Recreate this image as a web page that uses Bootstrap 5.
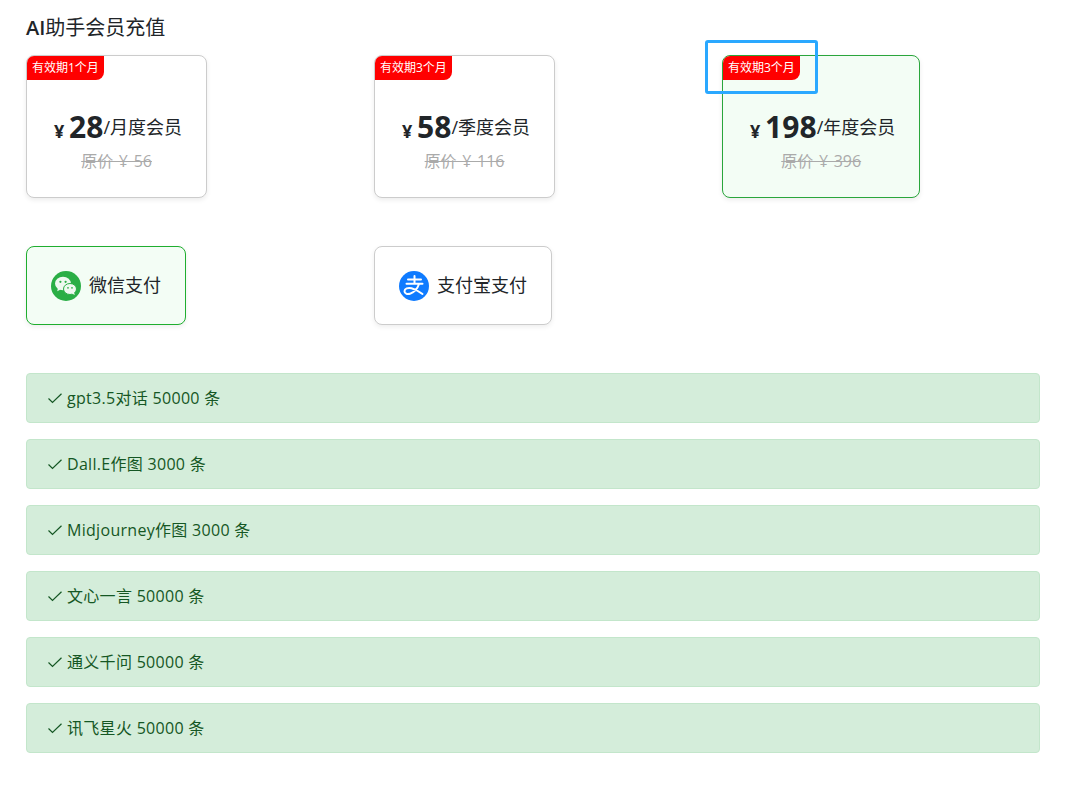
<!DOCTYPE html>
<html lang="zh">
<head>
<meta charset="utf-8">
<title>AI助手会员充值</title>
<link href="https://cdn.jsdelivr.net/npm/bootstrap@5.3.0/dist/css/bootstrap.min.css" rel="stylesheet">
<style>
html,body{height:100%;overflow:hidden;}
body{font-family:"Open Sans","Noto Sans CJK SC",sans-serif;color:#212529;background:#fff;}
.pg{padding:15px 36px 0 26px;}
.pg-title{font-size:20px;line-height:26px;font-weight:400;margin:0 0 14px;}
.pg-title b{font-weight:600;}
.slots{margin-right:-30px;}
.plan{position:relative;height:143px;padding:0 24px 0 27px;border:1px solid #ccc;border-radius:8px;box-shadow:0 2px 5px rgba(0,0,0,.08);background:#fff;overflow:hidden;}
.plan.on{border-color:#2aa63c;background:#f3fdf5;}
.tagx{position:absolute;left:0;top:0;height:24px;line-height:24px;padding:0 5px;background:#f00;color:#fff;font-size:12px;border-bottom-right-radius:8px;}
.priceline{font-size:18px;line-height:38px;height:38px;white-space:nowrap;margin-top:52px;}
.cur{font-size:18px;font-weight:700;}
.amt{font-size:30px;font-weight:700;letter-spacing:.1px;}
.unit{vertical-align:4px;}
.orig{font-size:16px;line-height:24px;color:#aaa;text-decoration:line-through;word-spacing:1.5px;margin:3px 0 0 -3px;}
.pays{margin-top:48px;}
.payb{height:79px;padding:0 24px 0 24px;gap:8px;border:1px solid #ccc;border-radius:8px;box-shadow:0 2px 5px rgba(0,0,0,.07);font-size:18px;background:#fff;}
.payb.on{border-color:#1fae2f;background:#f3fdf5;}
.perks{margin-top:48px;}
.perk{height:50px;margin-bottom:16px;padding:0 20px;gap:4px;background:#d4edda;border:1px solid #c3e6cb;border-radius:4px;color:#155724;font-size:16px;letter-spacing:.3px;}
.focusbox{position:absolute;left:705px;top:40px;width:113px;height:54px;border:3px solid #2aa8ff;border-radius:3px;pointer-events:none;}
</style>
</head>
<body>
<div class="pg">
  <h1 class="pg-title"><b>AI</b>助手会员充值</h1>
  <div class="row g-0 slots">
    <div class="col-4 d-flex"><div class="plan text-center"><span class="tagx">有效期1个月</span><div class="priceline"><span class="cur">¥</span> <span class="amt">28</span><span class="unit">/月度会员</span></div><div class="orig">原价 ¥ 56</div></div></div>
    <div class="col-4 d-flex"><div class="plan text-center"><span class="tagx">有效期3个月</span><div class="priceline"><span class="cur">¥</span> <span class="amt">58</span><span class="unit">/季度会员</span></div><div class="orig">原价 ¥ 116</div></div></div>
    <div class="col-4 d-flex"><div class="plan on text-center"><span class="tagx">有效期3个月</span><div class="priceline"><span class="cur">¥</span> <span class="amt">198</span><span class="unit">/年度会员</span></div><div class="orig">原价 ¥ 396</div></div></div>
  </div>
  <div class="row g-0 slots pays">
    <div class="col-4 d-flex"><div class="payb on d-flex align-items-center">
      <svg width="30" height="30" viewBox="0 0 30 30"><circle cx="15" cy="15" r="15" fill="#2aae45"/><ellipse cx="12" cy="12.500" rx="8" ry="6.800" fill="#eef8ef"/><path d="M7 17l-.8 3.200 3.400-1.800z" fill="#eef8ef"/><ellipse cx="19" cy="18" rx="6.500" ry="5.500" fill="#eef8ef" stroke="#2aae45" stroke-width="1"/><path d="M23 21.500l.8 2.500-3-1.400z" fill="#eef8ef"/><circle cx="9.400" cy="10.800" r="1.100" fill="#2aae45"/><circle cx="14.600" cy="10.800" r="1.100" fill="#2aae45"/><circle cx="17" cy="16.800" r=".85" fill="#2aae45"/><circle cx="21" cy="16.800" r=".85" fill="#2aae45"/></svg>
      <span>微信支付</span></div></div>
    <div class="col-4 d-flex"><div class="payb d-flex align-items-center">
      <svg width="30" height="30" viewBox="0 0 30 30"><circle cx="15" cy="15" r="15" fill="#0f7bff"/><path d="M9 8.500h13M15.500 5v7.800M7.500 12.800h16M20 13c-1.500 4.500-4.500 8-8.500 9.500-3 1-6 .3-6-2.300 0-2.700 3.500-3.800 7-3 3.500.8 7.500 3 11 5.800" fill="none" stroke="#fff" stroke-width="2" stroke-linecap="round"/></svg>
      <span>支付宝支付</span></div></div>
  </div>
  <div class="perks">
    <div class="perk d-flex align-items-center"><svg width="16" height="16" viewBox="0 0 16 16"><path d="M1.500 8.500l4 4L14.500 3.800" fill="none" stroke="#155724" stroke-width="1.200"/></svg><span>gpt3.5对话 50000 条</span></div>
    <div class="perk d-flex align-items-center"><svg width="16" height="16" viewBox="0 0 16 16"><path d="M1.500 8.500l4 4L14.500 3.800" fill="none" stroke="#155724" stroke-width="1.200"/></svg><span>Dall.E作图 3000 条</span></div>
    <div class="perk d-flex align-items-center"><svg width="16" height="16" viewBox="0 0 16 16"><path d="M1.500 8.500l4 4L14.500 3.800" fill="none" stroke="#155724" stroke-width="1.200"/></svg><span>Midjourney作图 3000 条</span></div>
    <div class="perk d-flex align-items-center"><svg width="16" height="16" viewBox="0 0 16 16"><path d="M1.500 8.500l4 4L14.500 3.800" fill="none" stroke="#155724" stroke-width="1.200"/></svg><span>文心一言 50000 条</span></div>
    <div class="perk d-flex align-items-center"><svg width="16" height="16" viewBox="0 0 16 16"><path d="M1.500 8.500l4 4L14.500 3.800" fill="none" stroke="#155724" stroke-width="1.200"/></svg><span>通义千问 50000 条</span></div>
    <div class="perk d-flex align-items-center"><svg width="16" height="16" viewBox="0 0 16 16"><path d="M1.500 8.500l4 4L14.500 3.800" fill="none" stroke="#155724" stroke-width="1.200"/></svg><span>讯飞星火 50000 条</span></div>
  </div>
</div>
<div class="focusbox"></div>
<script src="https://cdn.jsdelivr.net/npm/bootstrap@5.3.0/dist/js/bootstrap.bundle.min.js"></script>
</body>
</html>
